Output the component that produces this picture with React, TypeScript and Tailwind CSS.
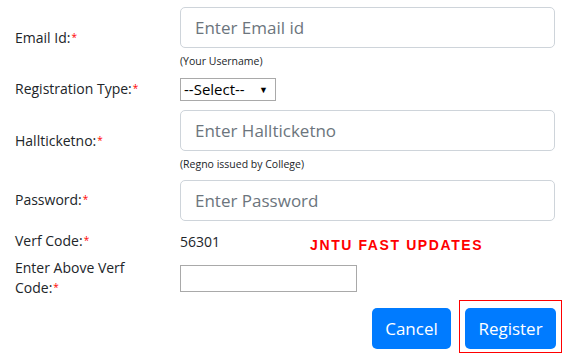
import type { ReactNode } from 'react'

function Req() {
  return <span className="relative -top-[2px] ml-px text-[10px] text-[#ff0000]">*</span>
}

function Row({ label, children, className = '' }: { label: ReactNode; children: ReactNode; className?: string }) {
  return (
    <div className={`flex items-center ${className}`}>
      <div className="w-[165px] shrink-0 text-[14px] leading-[20px] text-[#212529]">{label}</div>
      <div className="min-w-0 flex-1">{children}</div>
    </div>
  )
}

function BigInput({ placeholder }: { placeholder: string }) {
  return (
    <input
      placeholder={placeholder}
      className="block h-[41px] w-full rounded-[5px] border border-[#ced4da] bg-white px-[14px] text-[17px] text-[#495057] outline-none placeholder:text-[#6c757d]"
    />
  )
}

function Help({ children }: { children: ReactNode }) {
  return <p className="mt-[5px] text-[10.5px] leading-[16px] text-[#212529]">{children}</p>
}

export default function App() {
  return (
    <div
      className="h-[355px] w-[569px] overflow-hidden bg-white pl-[15px] pr-[14px] pt-[7px]"
      style={{ fontFamily: '"Open Sans", "Noto Sans", sans-serif' }}
    >
      <Row label={<>Email Id:<Req /></>}>
        <BigInput placeholder="Enter Email id" />
        <Help>(Your Username)</Help>
      </Row>

      <Row label={<>Registration Type:<Req /></>} className="mt-[9px]">
        <div className="flex h-[23px] w-[96px] items-center justify-between border border-[#a9a9a9] bg-white pl-[3px] pr-[7px] text-[15px] text-black">
          <span>--Select--</span>
          <span className="text-[9px]">▼</span>
        </div>
      </Row>

      <Row label={<>Hallticketno:<Req /></>} className="mt-[9px]">
        <BigInput placeholder="Enter Hallticketno" />
        <Help>(Regno issued by College)</Help>
      </Row>

      <Row label={<>Password:<Req /></>} className="mt-[8px]">
        <BigInput placeholder="Enter Password" />
      </Row>

      <Row label={<>Verf Code:<Req /></>} className="mt-[10px]">
        <div className="flex items-center text-[14px] leading-[20px] text-[#212529]">
          <span>56301</span>
          <span
            className="relative top-[3px] ml-[90px] text-[14px] font-bold tracking-[1.6px] text-[#ff0000]"
            style={{ fontFamily: '"Liberation Sans", Arial, sans-serif' }}
          >
            JNTU FAST UPDATES
          </span>
        </div>
      </Row>

      <Row label={<>Enter Above Verf<br />Code:<Req /></>} className="mt-[6px]">
        <input className="block h-[27px] w-[177px] border border-[#a9a9a9] bg-white outline-none" />
      </Row>

      <div className="-mr-[7px] mt-[1px] flex items-start justify-end gap-[8px]">
        <button className="mt-[8px] h-[41px] w-[79px] rounded-[5px] bg-[#007bff] text-[17px] text-white">Cancel</button>
        <span className="border border-[#ff0000] px-[5px] pb-[3px] pt-[7px]">
          <button className="block h-[41px] w-[91px] rounded-[5px] bg-[#007bff] text-[17px] text-white">Register</button>
        </span>
      </div>
    </div>
  )
}
